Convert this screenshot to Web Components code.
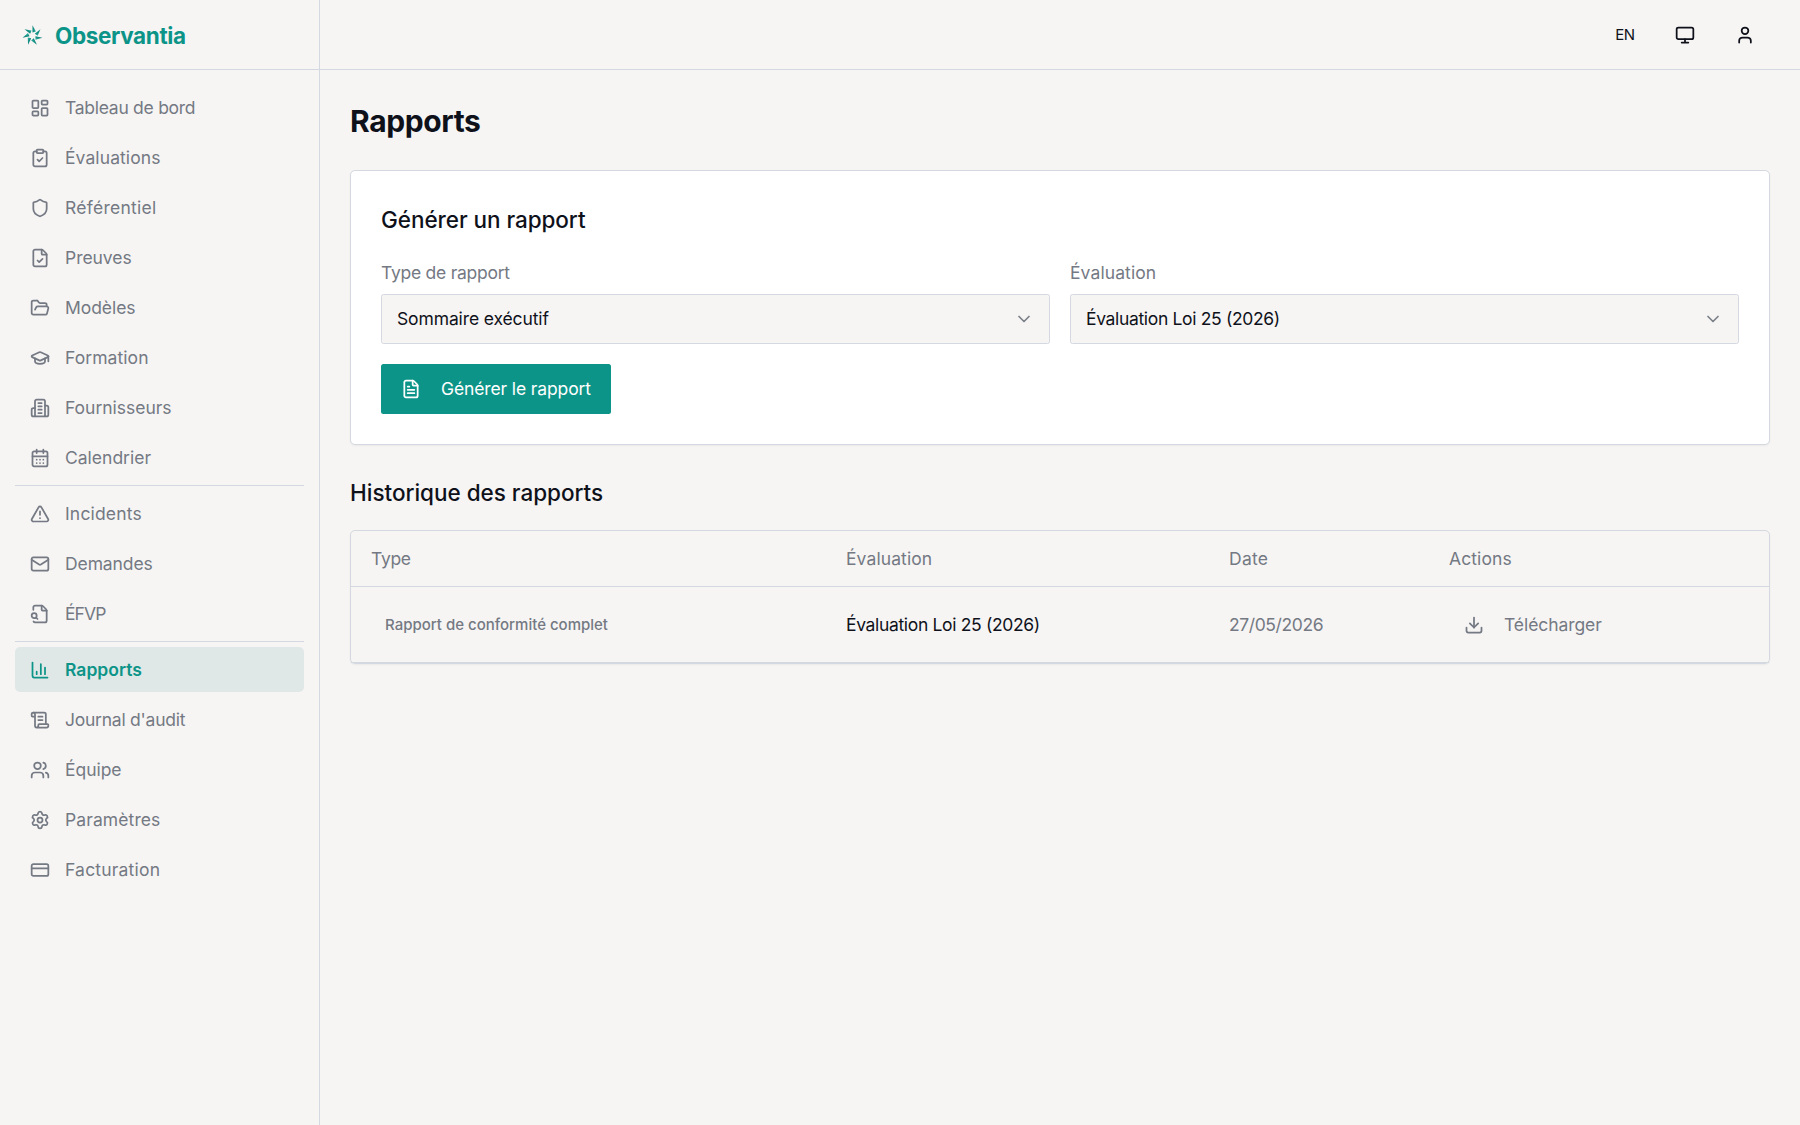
<!DOCTYPE html>
<html lang="fr">
<head>
<meta charset="utf-8">
<title>Rapports - Observantia</title>
<style>
    :root {
        --bg: #f6f5f4;
        --surface: #ffffff;
        --fg: #0f111a;
        --muted: #747983;
        --border: #d4d8e0;
        --primary: #0d9488;
    }

    body {
        margin: 0;
        background: var(--bg);
        color: var(--fg);
        font-family: Inter, "Open Sans", sans-serif;
        font-size: 17.5px;
        line-height: 25px;
    }
</style>
</head>
<body>
<obs-app></obs-app>

<script>
const ICONS = {
    dashboard: '<rect width="7" height="9" x="3" y="3" rx="1"/><rect width="7" height="5" x="14" y="3" rx="1"/><rect width="7" height="9" x="14" y="12" rx="1"/><rect width="7" height="5" x="3" y="16" rx="1"/>',
    clipboard: '<rect width="8" height="4" x="8" y="2" rx="1"/><path d="M16 4h2a2 2 0 0 1 2 2v14a2 2 0 0 1-2 2H6a2 2 0 0 1-2-2V6a2 2 0 0 1 2-2h2"/><path d="m9 14 2 2 4-4"/>',
    shield: '<path d="M20 13c0 5-3.5 7.500-7.660 8.950a1 1 0 0 1-.67-.01C7.500 20.500 4 18 4 13V6a1 1 0 0 1 1-1c2 0 4.500-1.200 6.240-2.720a1.170 1.170 0 0 1 1.520 0C14.510 3.810 17 5 19 5a1 1 0 0 1 1 1z"/>',
    fileCheck: '<path d="M6 22a2 2 0 0 1-2-2V4a2 2 0 0 1 2-2h8a2.400 2.400 0 0 1 1.704.706l3.588 3.588A2.400 2.400 0 0 1 20 8v12a2 2 0 0 1-2 2z"/><path d="M14 2v5a1 1 0 0 0 1 1h5"/><path d="m9 15 2 2 4-4"/>',
    folder: '<path d="m6 14 1.500-2.900A2 2 0 0 1 9.240 10H20a2 2 0 0 1 1.940 2.500l-1.540 6a2 2 0 0 1-1.950 1.500H4a2 2 0 0 1-2-2V5a2 2 0 0 1 2-2h3.900a2 2 0 0 1 1.690.9l.81 1.200a2 2 0 0 0 1.670.9H18a2 2 0 0 1 2 2v2"/>',
    cap: '<path d="M21.420 10.922a1 1 0 0 0-.019-1.838L12.830 5.180a2 2 0 0 0-1.660 0L2.600 9.080a1 1 0 0 0 0 1.832l8.570 3.908a2 2 0 0 0 1.660 0z"/><path d="M22 10v6"/><path d="M6 12.500V16a6 3 0 0 0 12 0v-3.500"/>',
    building: '<path d="M6 22V4a2 2 0 0 1 2-2h8a2 2 0 0 1 2 2v18Z"/><path d="M6 12H4a2 2 0 0 0-2 2v6a2 2 0 0 0 2 2h2"/><path d="M18 9h2a2 2 0 0 1 2 2v9a2 2 0 0 1-2 2h-2"/><path d="M10 6h4M10 10h4M10 14h4M10 18h4"/>',
    calendar: '<path d="M8 2v4M16 2v4"/><rect width="18" height="18" x="3" y="4" rx="2"/><path d="M3 10h18"/><path d="M8 14h.01M12 14h.01M16 14h.01M8 18h.01M12 18h.01M16 18h.01"/>',
    alert: '<path d="m21.730 18-8-14a2 2 0 0 0-3.480 0l-8 14A2 2 0 0 0 4 21h16a2 2 0 0 0 1.730-3"/><path d="M12 9v4M12 17h.01"/>',
    mail: '<path d="m22 7-8.991 5.727a2 2 0 0 1-2.009 0L2 7"/><rect x="2" y="4" width="20" height="16" rx="2"/>',
    fileSearch: '<path d="M14 2v5a1 1 0 0 0 1 1h5"/><path d="M4.268 21a2 2 0 0 0 1.727 1H18a2 2 0 0 0 2-2V8a2.400 2.400 0 0 0-.706-1.706l-3.588-3.588A2.400 2.400 0 0 0 14 2H6a2 2 0 0 0-2 2v3"/><path d="m9 18-1.500-1.500"/><circle cx="5" cy="14" r="3"/>',
    chart: '<path d="M3 3v16a2 2 0 0 0 2 2h16"/><path d="M18 17V9M13 17V5M8 17v-3"/>',
    scroll: '<path d="M15 12h-5M15 8h-5"/><path d="M19 17V5a2 2 0 0 0-2-2H4"/><path d="M8 21h12a2 2 0 0 0 2-2v-1a1 1 0 0 0-1-1H11a1 1 0 0 0-1 1v1a2 2 0 1 1-4 0V5a2 2 0 1 0-4 0v2a1 1 0 0 0 1 1h3"/>',
    users: '<path d="M16 21v-2a4 4 0 0 0-4-4H6a4 4 0 0 0-4 4v2"/><path d="M16 3.128a4 4 0 0 1 0 7.744"/><path d="M22 21v-2a4 4 0 0 0-3-3.870"/><circle cx="9" cy="7" r="4"/>',
    settings: '<path d="M9.671 4.136a2.340 2.340 0 0 1 4.659 0 2.340 2.340 0 0 0 3.319 1.915 2.340 2.340 0 0 1 2.330 4.033 2.340 2.340 0 0 0 0 3.831 2.340 2.340 0 0 1-2.330 4.033 2.340 2.340 0 0 0-3.319 1.915 2.340 2.340 0 0 1-4.659 0 2.340 2.340 0 0 0-3.320-1.915 2.340 2.340 0 0 1-2.330-4.033 2.340 2.340 0 0 0 0-3.831A2.340 2.340 0 0 1 6.350 6.051a2.340 2.340 0 0 0 3.319-1.915"/><circle cx="12" cy="12" r="3"/>',
    card: '<rect width="20" height="14" x="2" y="5" rx="2"/><path d="M2 10h20"/>',
    monitor: '<rect width="20" height="14" x="2" y="3" rx="2"/><path d="M8 21h8M12 17v4"/>',
    user: '<path d="M19 21v-2a4 4 0 0 0-4-4H9a4 4 0 0 0-4 4v2"/><circle cx="12" cy="7" r="4"/>',
    fileText: '<path d="M6 22a2 2 0 0 1-2-2V4a2 2 0 0 1 2-2h8a2.400 2.400 0 0 1 1.704.706l3.588 3.588A2.400 2.400 0 0 1 20 8v12a2 2 0 0 1-2 2z"/><path d="M14 2v5a1 1 0 0 0 1 1h5"/><path d="M10 9H8M16 13H8M16 17H8"/>',
    chevron: '<path d="m6 9 6 6 6-6"/>',
    download: '<path d="M12 15V3"/><path d="M21 15v4a2 2 0 0 1-2 2H5a2 2 0 0 1-2-2v-4"/><path d="m7 10 5 5 5-5"/>'
};

// Shared base: puts style_() and html() in an open shadow root
class ObsElement extends HTMLElement {

    constructor() {
        super();
        this.shadow = this.attachShadow({mode: 'open'});
    }

    connectedCallback() {
        this.shadow.innerHTML = this.style_() + this.html();
    }

}

class ObsIcon extends ObsElement {

    style_() {
        return `<style>
            :host {
                display: block;
                flex: none;
                width: 20px;
                height: 20px;
            }

            svg {
                display: block;
            }
        </style>`;
    }

    html() {
        return `<svg width="20" height="20" viewBox="0 0 24 24" fill="none" stroke="currentColor"
                    stroke-width="2.1" stroke-linecap="round" stroke-linejoin="round">${ICONS[this.getAttribute('name')]}</svg>`;
    }

}
customElements.define('obs-icon', ObsIcon);

class ObsLogo extends ObsElement {

    style_() {
        return `<style>
            :host {
                display: flex;
                align-items: center;
                box-sizing: border-box;
                height: 70px;
                padding: 1px 20px 0 22px;
                gap: 12px;
                border-bottom: 1px solid var(--border);
                color: var(--primary);
                font-size: 22.5px;
                font-weight: 700;
                letter-spacing: -.37px;
            }
        </style>`;
    }

    html() {
        let blades = '';
        for (let i = 0; i < 7; i++) {
            blades += `<path transform="rotate(${i * 360 / 7})" fill="url(#blade)" d="M0-10.200 3.400-3.900 0-3z"/>`;
        }
        return `<svg width="21" height="21" viewBox="-10.500 -10.500 21 21">
                    <defs>
                        <linearGradient id="blade" x1="0" x2="1" y1="0" y2="0">
                            <stop offset="0" stop-color="#0b8278"/>
                            <stop offset="1" stop-color="#35b3a6"/>
                        </linearGradient>
                    </defs>
                    ${blades}
                </svg>
                <span><slot></slot></span>`;
    }

}
customElements.define('obs-logo', ObsLogo);

class ObsNavItem extends ObsElement {

    style_() {
        return `<style>
            :host {
                display: flex;
                align-items: center;
                height: 45px;
                padding: 0 15px;
                gap: 15px;
                border-radius: 5px;
                color: var(--muted);
                white-space: nowrap;
            }

            :host([active]) {
                background: #e0e8e7;
                color: var(--primary);
                font-weight: 600;
            }
        </style>`;
    }

    html() {
        return `<obs-icon name="${this.getAttribute('icon')}"></obs-icon><span><slot></slot></span>`;
    }

}
customElements.define('obs-nav-item', ObsNavItem);

class ObsSidebar extends ObsElement {

    style_() {
        return `<style>
            :host {
                display: block;
                box-sizing: border-box;
                border-right: 1px solid var(--border);
            }

            nav {
                display: flex;
                flex-direction: column;
                gap: 5px;
                padding: 15px;
            }

            hr {
                width: 100%;
                height: 1px;
                margin: 0;
                border: 0;
                background: var(--border);
            }
        </style>`;
    }

    html() {
        // icon, label, tracking
        const groups = [
            [
                ['dashboard', 'Tableau de bord', -.27],
                ['clipboard', 'Évaluations', .09],
                ['shield', 'Référentiel', .27],
                ['fileCheck', 'Preuves', -.04],
                ['folder', 'Modèles', -.05],
                ['cap', 'Formation', .07],
                ['building', 'Fournisseurs', -.02],
                ['calendar', 'Calendrier', 0]
            ],
            [
                ['alert', 'Incidents', .17],
                ['mail', 'Demandes', -.1],
                ['fileSearch', 'ÉFVP', -.9]
            ],
            [
                ['chart', 'Rapports', .02],
                ['scroll', "Journal d'audit", -.24],
                ['users', 'Équipe', -.04],
                ['settings', 'Paramètres', .1],
                ['card', 'Facturation', .2]
            ]
        ];
        const items = groups.map(group => group.map(([icon, label, ls]) =>
            `<obs-nav-item icon="${icon}" style="letter-spacing: ${ls}px"${label === 'Rapports' ? ' active' : ''}>${label}</obs-nav-item>`
        ).join('')).join('<hr>');
        return `<obs-logo>Observantia</obs-logo><nav>${items}</nav>`;
    }

}
customElements.define('obs-sidebar', ObsSidebar);

class ObsTopbar extends ObsElement {

    style_() {
        return `<style>
            :host {
                display: flex;
                align-items: center;
                justify-content: flex-end;
                box-sizing: border-box;
                height: 70px;
                padding: 1px 30px 0;
                gap: 10px;
                border-bottom: 1px solid var(--border);
            }

            button {
                display: flex;
                align-items: center;
                justify-content: center;
                width: 50px;
                height: 50px;
                padding: 0;
                border: 0;
                background: none;
                color: inherit;
                font: 400 15px/20px Inter, sans-serif;
                letter-spacing: -.3px;
            }
        </style>`;
    }

    html() {
        return `<button>EN</button>
                <button><obs-icon name="monitor"></obs-icon></button>
                <button><obs-icon name="user"></obs-icon></button>`;
    }

}
customElements.define('obs-topbar', ObsTopbar);

class ObsSelect extends ObsElement {

    style_() {
        return `<style>
            :host {
                display: block;
            }

            label {
                display: block;
                margin-bottom: 9px;
                color: var(--muted);
            }

            #box {
                display: flex;
                align-items: center;
                justify-content: space-between;
                box-sizing: border-box;
                height: 50px;
                padding: 0 15px;
                border: 1px solid var(--border);
                border-radius: 2.5px;
                background: var(--bg);
            }

            #box span {
                padding-bottom: 2px;
            }

            obs-icon {
                color: #7c8088;
            }
        </style>`;
    }

    html() {
        return `<label style="letter-spacing: ${this.getAttribute('label-tracking')}px">${this.getAttribute('label')}</label>
                <div id="box">
                    <span><slot></slot></span>
                    <obs-icon name="chevron"></obs-icon>
                </div>`;
    }

}
customElements.define('obs-select', ObsSelect);

class ObsButton extends ObsElement {

    style_() {
        return `<style>
            :host {
                display: flex;
                width: fit-content;
            }

            button {
                display: flex;
                align-items: center;
                height: 50px;
                padding: 0 20px;
                gap: 20px;
                border: 0;
                border-radius: 2.5px;
                background: var(--primary);
                color: #ffffff;
                font: inherit;
                letter-spacing: inherit;
                white-space: nowrap;
            }

            :host(:not([ghost])) span {
                padding-bottom: 2px;
            }

            :host([ghost]) button {
                padding: 0 15px;
                background: none;
                color: var(--muted);
            }
        </style>`;
    }

    html() {
        return `<button><obs-icon name="${this.getAttribute('icon')}"></obs-icon><span><slot></slot></span></button>`;
    }

}
customElements.define('obs-button', ObsButton);

class ObsReportForm extends ObsElement {

    style_() {
        return `<style>
            :host {
                display: block;
                box-sizing: border-box;
                height: 275px;
                padding: 30px;
                border: 1px solid var(--border);
                border-radius: 5px;
                background: var(--surface);
                box-shadow: 0 1px 2px rgba(0,0,0,0.05);
            }

            h2 {
                margin: 0 0 21px;
                font-size: 22.5px;
                font-weight: 500;
                line-height: 38px;
                letter-spacing: -.06px;
            }

            #fields {
                display: grid;
                grid-template-columns: 1fr 1fr;
                gap: 20px;
                margin-bottom: 20px;
            }
        </style>`;
    }

    html() {
        return `<h2>Générer un rapport</h2>
                <div id="fields">
                    <obs-select label="Type de rapport" label-tracking="-.26" style="letter-spacing: -.12px">Sommaire exécutif</obs-select>
                    <obs-select label="Évaluation" label-tracking=".1" style="letter-spacing: -.34px">Évaluation Loi 25 (2026)</obs-select>
                </div>
                <obs-button icon="fileText" style="letter-spacing: -.12px">Générer le rapport</obs-button>`;
    }

}
customElements.define('obs-report-form', ObsReportForm);

class ObsReportTable extends ObsElement {

    style_() {
        return `<style>
            :host {
                display: block;
                border: 1px solid var(--border);
                border-radius: 5px;
                box-shadow: 0 1px 2px rgba(0,0,0,0.05);
            }

            .row {
                display: grid;
                grid-template-columns: 475px 383px 220px 1fr;
                align-items: center;
                height: 75px;
                border-bottom: 1px solid var(--border);
                color: var(--muted);
            }

            .row.head {
                height: 55px;
            }

            .row > span {
                padding-left: 20px;
            }

            .name {
                color: var(--fg);
                letter-spacing: -.34px;
            }

            .badge {
                display: block;
                padding: 0 14px;
                font-size: 15px;
                font-weight: 500;
            }
        </style>`;
    }

    html() {
        return `<div class="row head">
                    <span style="letter-spacing: -.3px">Type</span>
                    <span style="letter-spacing: .1px">Évaluation</span>
                    <span style="letter-spacing: .25px">Date</span>
                    <span style="letter-spacing: .1px">Actions</span>
                </div>
                <div class="row">
                    <span><span class="badge">Rapport de conformité complet</span></span>
                    <span class="name">Évaluation Loi 25 (2026)</span>
                    <span style="letter-spacing: -.4px">27/05/2026</span>
                    <span><obs-button ghost icon="download" style="letter-spacing: -.08px">Télécharger</obs-button></span>
                </div>`;
    }

}
customElements.define('obs-report-table', ObsReportTable);

class ObsApp extends ObsElement {

    style_() {
        return `<style>
            :host {
                display: grid;
                grid-template-columns: 320px 1fr;
                min-height: 100vh;
            }

            main {
                padding: 30px;
            }

            h1 {
                margin: 0 0 28px;
                font-size: 30px;
                font-weight: 700;
                line-height: 42px;
                letter-spacing: -.38px;
            }

            h2 {
                margin: 30px 0 19px;
                font-size: 22.5px;
                font-weight: 500;
                line-height: 36px;
                letter-spacing: -.02px;
            }
        </style>`;
    }

    html() {
        return `<obs-sidebar></obs-sidebar>
                <div>
                    <obs-topbar></obs-topbar>
                    <main>
                        <h1>Rapports</h1>
                        <obs-report-form></obs-report-form>
                        <h2>Historique des rapports</h2>
                        <obs-report-table></obs-report-table>
                    </main>
                </div>`;
    }

}
customElements.define('obs-app', ObsApp);
</script>
</body>
</html>
